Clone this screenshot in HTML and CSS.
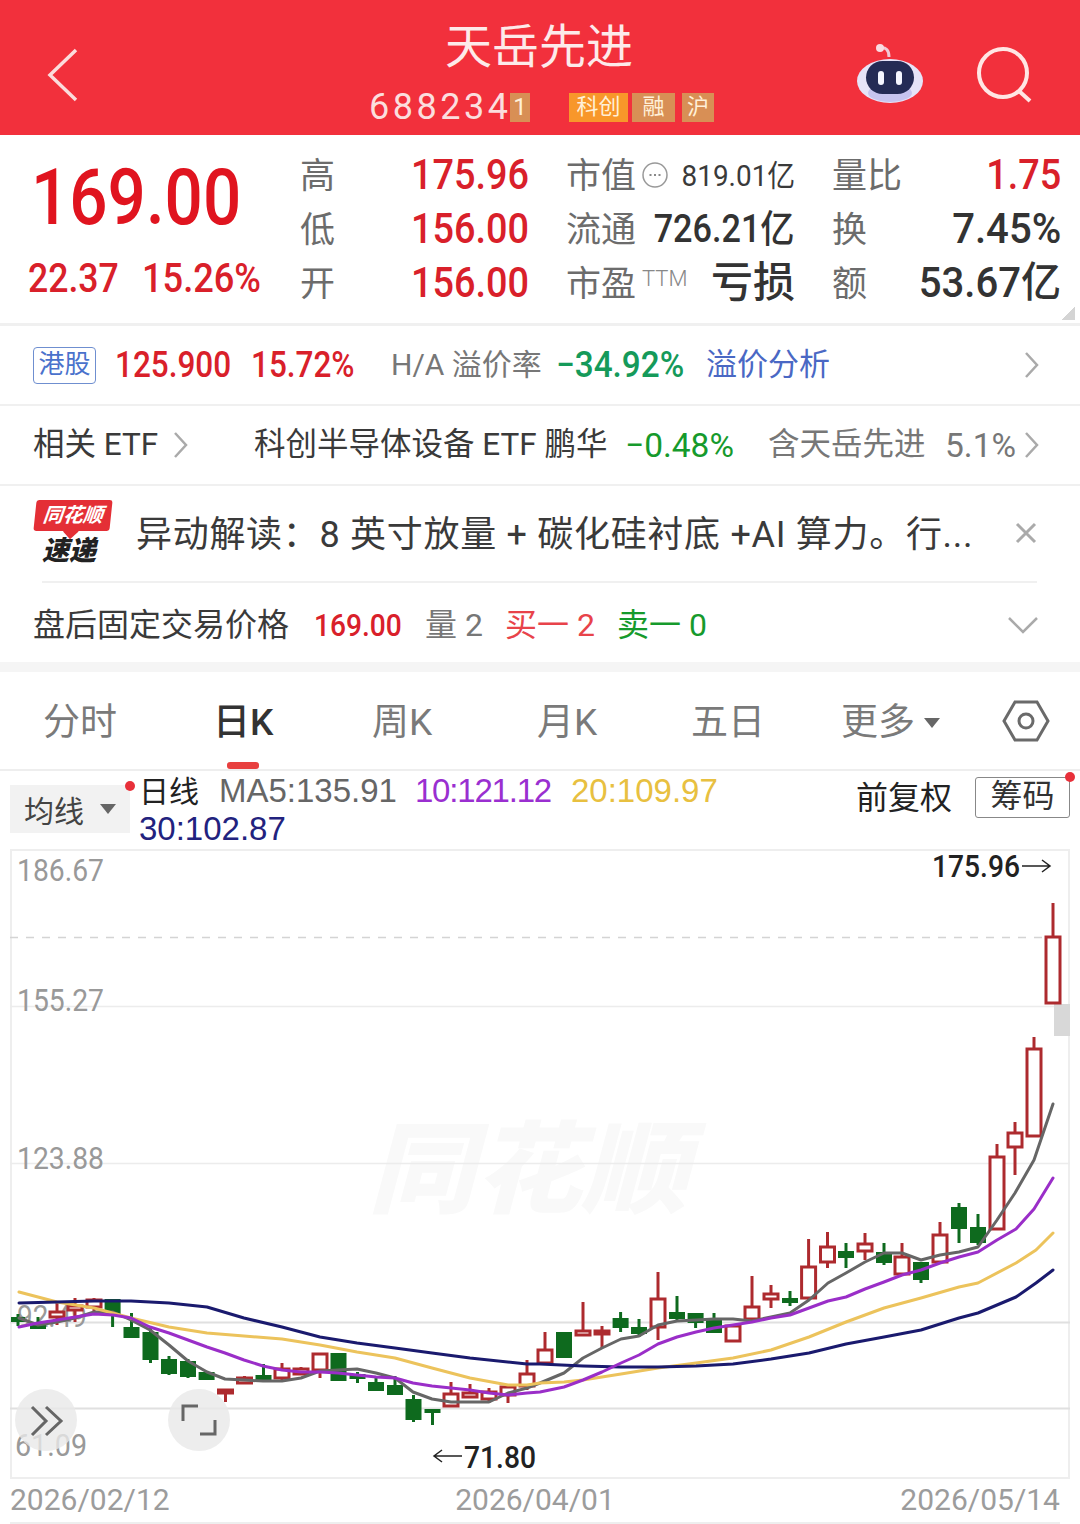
FILE: index.html
```html
<!DOCTYPE html>
<html lang="zh">
<head>
<meta charset="utf-8">
<title>天岳先进</title>
<link rel="stylesheet" href="styles.css">
</head>
<body>
<div class="page">
  <header class="header">
    <svg class="back" viewBox="0 0 32 56" width="32" height="56"><path d="M29 2 3 27l26 25" /></svg>
    <div class="head-mid">
      <div class="title">天岳先进</div>
      <div class="code-row">
        <span class="code">68823<span class="code-last">4</span></span><span class="tag tag-dim tag-one">1</span>
        <span class="tag tag-hot tag-kc">科创</span>
        <span class="tag tag-dim tag-rong">融</span>
        <span class="tag tag-dim tag-hu">沪</span>
      </div>
    </div>
    <svg class="robot" viewBox="0 0 70 62" width="70" height="62">
      <path class="robot-ant" d="M25 5c6-1 9 2 9 9"/>
      <circle class="robot-ball" cx="25" cy="5" r="4"/>
      <ellipse class="robot-head" cx="35" cy="38" rx="33" ry="22"/>
      <ellipse class="robot-chin" cx="35" cy="50" rx="22" ry="9"/>
      <rect class="robot-face" x="11" y="18" width="48" height="33" rx="16.5"/>
      <rect class="robot-eye" x="23" y="28" width="6" height="14" rx="3"/>
      <rect class="robot-eye" x="41" y="28" width="6" height="14" rx="3"/>
    </svg>
    <svg class="search" viewBox="0 0 60 62" width="60" height="62"><circle cx="27" cy="27" r="24"/><path d="M43 45l11 10"/></svg>
  </header>

  <section class="quote">
    <div class="price">
      <div class="price-main">169.00</div>
      <div class="price-sub"><span class="sub-a">22.37</span><span class="sub-b">15.26%</span></div>
    </div>
    <div class="stats">
      <div class="cell"><span class="lab">高</span><span class="val red">175.96</span></div>
      <div class="cell"><span class="lab">市值</span><svg class="more-dot" viewBox="0 0 28 28" width="28" height="28"><circle cx="14" cy="14" r="12"/><path d="M8.500 14h2M13 14h2M17.500 14h2"/></svg><span class="val-sm">819.01亿</span></div>
      <div class="cell"><span class="lab">量比</span><span class="val red">1.75</span></div>
      <div class="cell"><span class="lab">低</span><span class="val red">156.00</span></div>
      <div class="cell"><span class="lab">流通</span><span class="val val-md dark">726.21亿</span></div>
      <div class="cell"><span class="lab">换</span><span class="val val-wide dark">7.45%</span></div>
      <div class="cell"><span class="lab">开</span><span class="val red">156.00</span></div>
      <div class="cell"><span class="lab">市盈<sup class="ttm">TTM</sup></span><span class="val-cn">亏损</span></div>
      <div class="cell"><span class="lab">额</span><span class="val val-wide dark">53.67亿</span></div>
    </div>
    <i class="corner"></i>
  </section>

  <section class="row row-hk">
    <span class="hk-tag">港股</span>
    <span class="num red">125.900</span>
    <span class="num red">15.72%</span>
    <span class="txt gray">H/A 溢价率</span>
    <span class="num num-wide teal">−34.92%</span>
    <span class="txt blue">溢价分析</span>
    <svg class="chev" viewBox="0 0 16 28" width="16" height="28"><path d="M2 2l11 12L2 26"/></svg>
  </section>

  <section class="row row-etf">
    <span class="txt ink">相关 ETF</span>
    <svg class="chev" viewBox="0 0 16 28" width="16" height="28"><path d="M2 2l11 12L2 26"/></svg>
    <span class="txt ink">科创半导体设备 ETF 鹏华</span>
    <span class="num-l green">−0.48%</span>
    <span class="txt gray">含天岳先进</span>
    <span class="num-l gray">5.1%</span>
    <svg class="chev" viewBox="0 0 16 28" width="16" height="28"><path d="M2 2l11 12L2 26"/></svg>
  </section>

  <section class="news">
    <div class="logo">
      <div class="bubble"><span class="bubble-text">同花顺</span></div>
      <div class="logo-sub">速递</div>
    </div>
    <div class="news-text">异动解读：8 英寸放量 + 碳化硅衬底 +AI 算力。行...</div>
    <svg class="close" viewBox="0 0 24 24" width="24" height="24"><path d="M3 3l18 18M21 3 3 21"/></svg>
  </section>

  <section class="after">
    <span class="txt-32 ink">盘后固定交易价格</span>
    <span class="num-m red">169.00</span>
    <span class="txt-32 gray">量 2</span>
    <span class="txt-32 rose">买一 2</span>
    <span class="txt-32 green">卖一 0</span>
    <svg class="down" viewBox="0 0 32 18" width="32" height="18"><path d="M2 2l14 14L30 2"/></svg>
  </section>

  <div class="band"></div>

  <nav class="tabs">
    <span class="tab">分时</span>
    <span class="tab tab-on">日K</span>
    <span class="tab">周K</span>
    <span class="tab">月K</span>
    <span class="tab">五日</span>
    <span class="tab">更多<i class="tab-caret"></i></span>
    <svg class="hex" viewBox="0 0 48 44" width="48" height="44"><path d="M2 22 13 3h22l11 19-11 19H13z"/><circle cx="24" cy="22" r="7"/></svg>
  </nav>

  <section class="legend">
    <div class="ma-select"><span>均线</span><i class="ma-caret"></i><i class="dot dot-ma"></i></div>
    <div class="ma-text">
      <span class="ma-day">日线</span><span class="ma-5">MA5:135.91</span><span class="ma-10">10:121.12</span><span class="ma-20">20:109.97</span><br>
      <span class="ma-30">30:102.87</span>
    </div>
    <div class="legend-right">
      <span class="adj">前复权</span>
      <span class="chips">筹码<i class="dot dot-chips"></i></span>
    </div>
  </section>

  <section class="chart">
    <svg class="chart-svg" viewBox="10 849 1060 630" width="1060" height="630">
      <text class="wm" x="368" y="1205" textLength="320" lengthAdjust="spacingAndGlyphs">同花顺</text>
      <path class="grid-dash" d="M10 937.500H1054"/>
      <path class="grid" d="M10 1006.500H1070M10 1163.500H1070"/>
      <path class="grid-strong" d="M10 1322.500H1070M10 1408.500H1070"/>
      <rect class="thumb" x="1054" y="1004" width="16" height="32"/>
      <text class="axis" x="17" y="881" textLength="87" lengthAdjust="spacingAndGlyphs">186.67</text>
      <text class="axis" x="17" y="1011" textLength="87" lengthAdjust="spacingAndGlyphs">155.27</text>
      <text class="axis" x="17" y="1169" textLength="87" lengthAdjust="spacingAndGlyphs">123.88</text>
      <text class="axis" x="17" y="1327" textLength="70" lengthAdjust="spacingAndGlyphs">92.49</text>
      <text class="axis" x="15" y="1456" textLength="72" lengthAdjust="spacingAndGlyphs">61.09</text>

      <g class="up">
        <path d="M1053 903V1003"/><rect x="1046" y="937" width="14" height="66"/>
        <path d="M1034 1037V1136"/><rect x="1027" y="1049" width="14" height="87"/>
        <path d="M1015 1122V1175"/><rect x="1008" y="1133" width="14" height="14"/>
        <path d="M997 1144V1229"/><rect x="990" y="1157" width="14" height="72"/>
        <path d="M940 1222V1262"/><rect x="933" y="1235" width="14" height="27"/>
        <path d="M902 1243V1274"/><rect x="895" y="1257" width="14" height="17"/>
        <path d="M865 1233V1260"/><rect x="858" y="1244" width="14" height="7"/>
        <path d="M827.500 1232V1268"/><rect x="820.500" y="1247" width="14" height="15"/>
        <path d="M808.600 1239V1300"/><rect x="801.600" y="1267" width="14" height="31"/>
        <path d="M771 1285V1308"/><rect x="764" y="1294" width="14" height="5"/>
        <path d="M752 1276V1319"/><rect x="745" y="1307" width="14" height="12"/>
        <rect x="726" y="1326" width="14" height="15"/>
        <path d="M658 1272V1340"/><rect x="651" y="1299" width="14" height="28"/>
        <path d="M602 1326V1348"/><rect x="595" y="1331" width="14" height="3"/>
        <path d="M583 1302V1335"/><rect x="576" y="1331" width="14" height="4"/>
        <path d="M545 1332V1363"/><rect x="538" y="1350" width="14" height="13"/>
        <path d="M527 1360V1390"/><rect x="520" y="1374" width="14" height="12"/>
        <path d="M508 1385V1403"/><rect x="501" y="1387" width="14" height="8"/>
        <path d="M489 1388V1403"/><rect x="482" y="1392" width="14" height="7"/>
        <path d="M470 1384V1397"/><rect x="463" y="1393" width="14" height="4"/>
        <path d="M451 1382V1407"/><rect x="444" y="1394" width="14" height="12"/>
        <path d="M320 1354V1378"/><rect x="313" y="1354" width="14" height="16"/>
        <path d="M301 1367V1374"/><rect x="294" y="1369" width="14" height="5"/>
        <path d="M282 1363V1382"/><rect x="275" y="1369" width="14" height="9"/>
        <path d="M244.500 1376V1384"/><rect x="237.500" y="1378" width="14" height="5"/>
        <path d="M225.500 1390V1402"/><rect x="218.500" y="1390" width="14" height="3"/>
        <path d="M94 1298V1312"/><rect x="87" y="1300" width="14" height="7"/>
        <path d="M75 1298V1322"/><rect x="68" y="1306" width="14" height="4"/>
        <path d="M57 1303V1325"/><rect x="50" y="1312" width="14" height="5"/>
      </g>
      <g class="dn">
        <path d="M978 1214V1245"/><rect x="971" y="1228" width="14" height="14"/>
        <path d="M959 1203V1243"/><rect x="952" y="1208" width="14" height="20"/>
        <path d="M921 1262V1283"/><rect x="914" y="1263" width="14" height="16"/>
        <path d="M884 1243V1265"/><rect x="877" y="1253" width="14" height="9"/>
        <path d="M846 1243V1268"/><rect x="839" y="1252" width="14" height="5"/>
        <path d="M790 1291V1306"/><rect x="783" y="1299" width="14" height="3"/>
        <path d="M714 1313V1333"/><rect x="707" y="1319" width="14" height="13"/>
        <path d="M695.600 1313V1328"/><rect x="688.600" y="1314" width="14" height="8"/>
        <path d="M677 1296V1320"/><rect x="670" y="1313" width="14" height="5"/>
        <path d="M639 1319V1337"/><rect x="632" y="1328" width="14" height="5"/>
        <path d="M620.600 1312V1332"/><rect x="613.600" y="1319" width="14" height="8"/>
        <path d="M564 1333V1358"/><rect x="557" y="1333" width="14" height="24"/>
        <path d="M432.500 1410V1425"/><rect x="425.500" y="1410" width="14" height="2"/>
        <path d="M413.500 1395V1422"/><rect x="406.500" y="1400" width="14" height="19"/>
        <path d="M395 1376V1394"/><rect x="388" y="1386" width="14" height="8"/>
        <path d="M376 1378V1390"/><rect x="369" y="1383" width="14" height="7"/>
        <path d="M357.500 1372V1383"/><rect x="350.500" y="1375" width="14" height="3"/>
        <rect x="331.500" y="1354" width="14" height="26"/>
        <path d="M263.500 1364V1380"/><rect x="256.500" y="1376" width="14" height="4"/>
        <path d="M206.600 1371V1379"/><rect x="199.600" y="1373" width="14" height="6"/>
        <path d="M188 1359V1378"/><rect x="181" y="1362" width="14" height="14"/>
        <path d="M169 1356V1375"/><rect x="162" y="1360" width="14" height="13"/>
        <path d="M150.500 1327V1363"/><rect x="143.500" y="1333" width="14" height="26"/>
        <path d="M131.500 1313V1337"/><rect x="124.500" y="1328" width="14" height="9"/>
        <path d="M112.600 1300V1327"/><rect x="105.600" y="1300" width="14" height="15"/>
        <path d="M38 1317V1328"/><rect x="31" y="1326" width="14" height="2"/>
        <path d="M18 1314V1326"/><rect x="12" y="1318" width="12" height="3"/>
      </g>

      <polyline class="ma m5" points="19,1318 38,1325 57,1322 75,1318 94,1312 113,1312 131,1320 150,1330 169,1345 188,1361 207,1372 225,1379 244,1380 263,1381 282,1381 301,1378 320,1371 338,1370 357,1369 376,1373 395,1378 413,1392 432,1399 451,1402 470,1402 489,1402 508,1393 527,1388 540,1383 564,1373 583,1358 602,1348 621,1339 639,1336 658,1325 677,1321 696,1320 714,1319 733,1319 752,1321 771,1317 790,1313 809,1300 828,1283 846,1273 865,1262 884,1253 902,1253 921,1260 940,1255 959,1252 978,1247 997,1220 1015,1193 1034,1160 1053,1104"/>
      <polyline class="ma m20" points="19,1292 57,1302 94,1308 131,1318 169,1327 207,1333 244,1336 282,1339 320,1345 357,1352 395,1358 432,1368 470,1378 508,1385 527,1385 540,1383 564,1382 583,1380 621,1374 658,1368 696,1363 733,1358 771,1350 809,1337 846,1322 884,1308 921,1298 959,1287 978,1283 1016,1263 1036,1250 1053,1233"/>
      <polyline class="ma m30" points="19,1303 57,1302 94,1301 131,1301 169,1303 207,1307 244,1318 282,1327 320,1337 357,1343 395,1348 432,1353 470,1358 527,1364 540,1364 583,1366 621,1367 658,1367 696,1366 733,1364 771,1359 809,1353 846,1344 884,1337 921,1330 959,1318 978,1313 1016,1297 1036,1283 1053,1270"/>
      <polyline class="ma m10" points="19,1327 38,1323 57,1320 75,1317 94,1314 113,1315 131,1318 150,1327 169,1333 188,1340 207,1347 225,1353 244,1360 263,1366 282,1370 301,1372 320,1372 338,1373 357,1375 376,1377 395,1378 413,1383 432,1386 451,1388 470,1390 489,1393 508,1395 527,1393 540,1392 564,1387 583,1380 602,1372 621,1363 639,1355 658,1344 677,1337 696,1332 714,1328 733,1325 752,1322 771,1318 790,1315 809,1308 828,1301 846,1297 865,1289 884,1282 902,1275 921,1270 940,1263 959,1257 978,1252 997,1240 1016,1229 1034,1209 1053,1178"/>

      <circle class="fab" cx="46" cy="1420" r="31"/>
      <circle class="fab" cx="199" cy="1420" r="31"/>
      <path class="fab-ic" d="M32 1407l14 14-14 14M46 1407l15 14-15 14"/>
      <path class="fab-ic" d="M183 1421v-15h15M215 1420v14h-15"/>

      <text class="mark" x="932" y="877" textLength="88" lengthAdjust="spacingAndGlyphs">175.96</text>
      <path class="arrow" d="M1022 866h28m-8-6 8 6-8 6"/>
      <path class="arrow" d="M462 1456h-28m8-6-8 6 8 6"/>
      <text class="mark" x="464" y="1468" textLength="72" lengthAdjust="spacingAndGlyphs">71.80</text>
    </svg>
  </section>

  <footer class="dates">
    <span>2026/02/12</span><span>2026/04/01</span><span>2026/05/14</span>
  </footer>
</div>
</body>
</html>
```

FILE: styles.css
```css
* { box-sizing: border-box; margin: 0; padding: 0; }
html, body { background: #fff; }
body {
  width: 1080px;
  height: 1524px;
  overflow: hidden;
  font-family: Roboto, "Noto Sans CJK SC", sans-serif;
  color: #333;
}
.page { width: 1080px; height: 1524px; overflow: hidden; }
i { display: block; font-style: normal; }
.red { color: #d9202a; }
.dark { color: #333; }
.teal { color: #159a5a; }
.green { color: #169a2c; }
.rose { color: #e8434a; }
.gray { color: #777; }
.blue { color: #4a68c4; }
.ink { color: #3a3a3a; }

/* header */
.header {
  height: 135px;
  background: #f2303c;
  display: grid;
  grid-template-columns: 48px 790px 70px 60px;
  padding-left: 47px;
  position: relative;
}
.back { margin-top: 48px; }
.back path { fill: none; stroke: #fbdcdc; stroke-width: 3.500px; }
.head-mid { width: 790px; margin-left: -48px; padding-top: 21px; }
.title {
  margin-left: 398px;
  font-size: 47px;
  line-height: 52px;
  color: #fdeaea;
  font-weight: 400;
}
.code-row {
  display: grid;
  grid-template-columns: 141px 59px 63px 50px 32px;
  margin-left: 322px;
  margin-top: 16px;
  height: 36px;
  align-items: center;
  position: relative;
}
.code {
  font-size: 36px;
  letter-spacing: 3.500px;
  font-weight: 400;
  color: #fbdede;
  white-space: nowrap;
  line-height: 36px;
}
.tag {
  height: 29px;
  font-size: 22px;
  line-height: 28px;
  text-align: center;
  color: #fff0d8;
}
.tag-hot { background: #f8972a; width: 59px; }
.tag-dim { background: #d88f55; }
.tag-one { width: 20px; font-size: 24px; font-family: Roboto, sans-serif; }
.tag-rong { width: 43px; }
.tag-hu { width: 32px; }
.robot { margin-top: 43px; margin-left: -30px; }
.robot-ant { fill: none; stroke: #f2c9d6; stroke-width: 3px; }
.robot-ball { fill: #f9dbe2; }
.robot-head { fill: #e6e3f8; }
.robot-chin { fill: #c7c4ef; }
.robot-face { fill: #242b55; }
.robot-eye { fill: #f5f6ff; }
.search { margin-top: 46px; margin-left: 21px; }
.search circle, .search path { fill: none; stroke: #ffe6e4; stroke-width: 4px; }

/* quote */
.quote {
  height: 191px;
  border-bottom: 3px solid #f0f0f0;
  display: grid;
  grid-template-columns: 272px 761px;
  padding: 13px 0 0 28px;
  position: relative;
}
.price-main {
  font-size: 77px;
  line-height: 78px;
  font-weight: 500;
  color: #e0141f;
  transform: scaleX(.875);
  transform-origin: left;
  margin: 11px 0 0 3px;
  white-space: nowrap;
}
.price-sub { display: grid; grid-template-columns: 115px 130px; margin-top: 19px; }
.sub-a, .sub-b {
  font-size: 40px;
  line-height: 46px;
  font-weight: 500;
  color: #d9202a;
  transform: scaleX(.89);
  transform-origin: left;
  white-space: nowrap;
}
.sub-b { transform: scaleX(.905); margin-left: -1px; }
.stats {
  display: grid;
  grid-template-columns: 229px 229px 229px;
  column-gap: 37px;
  grid-auto-rows: 54px;
}
.cell { display: flex; align-items: center; white-space: nowrap; position: relative; }
.lab { font-size: 35px; line-height: 54px; color: #6c6c6c; flex: none; padding-top: 3px; }
.val {
  margin-left: auto;
  font-size: 42px;
  line-height: 54px;
  font-weight: 500;
  transform: scaleX(.9);
  transform-origin: right;
}
.val-md { font-size: 38px; }
.val-wide { transform: scaleX(.955); }
.val-sm { margin-left: auto; font-size: 30px; color: #3a3a3a; margin-top: -4px; transform: scaleX(.93); transform-origin: right; }
.val-cn { margin-left: auto; font-size: 42px; line-height: 54px; font-weight: 500; color: #333; }
.ttm { font-size: 22px; line-height: 22px; font-weight: 300; color: #888; vertical-align: 10px; margin-left: 6px; }
.more-dot { margin-left: 5px; flex: none; }
.more-dot circle { fill: none; stroke: #999; stroke-width: 1.500px; }
.more-dot path { fill: none; stroke: #888; stroke-width: 2px; }
.corner {
  position: absolute;
  right: 5px;
  bottom: 3px;
  width: 14px;
  height: 14px;
  background: linear-gradient(135deg, transparent 50%, #d4d4d4 50%);
}

/* rows */
.row {
  display: grid;
  align-items: center;
  padding-left: 33px;
  border-bottom: 2px solid #f0f0f0;
  white-space: nowrap;
}
.row-hk { height: 80px; grid-template-columns: 82px 136px 140px 165px 150px 318px 16px; }
.row-etf { height: 80px; grid-template-columns: 140px 81px 371px 143px 177px 79px 16px; }
.hk-tag {
  width: 63px;
  height: 37px;
  border: 1.500px solid #6f8fd0;
  border-radius: 4px;
  color: #4a72cc;
  font-size: 26px;
  line-height: 33px;
  text-align: center;
}
.num, .num-l {
  font-size: 36px;
  font-weight: 500;
  line-height: 44px;
  transform: scaleX(.875);
  transform-origin: left;
}
.num-wide { transform: scaleX(.925); }
.num-l { font-weight: 400; font-size: 34px; transform: scaleX(.985); }
.txt { font-size: 31px; line-height: 44px; }
.row-hk .txt:nth-of-type(4) { font-size: 30px; }
.row-etf .txt { font-size: 31.500px; }
.chev path { fill: none; stroke: #aaa; stroke-width: 2.500px; }

/* news */
.news {
  height: 97px;
  display: grid;
  grid-template-columns: 103px 879px 24px;
  align-items: center;
  padding-left: 33px;
  position: relative;
}
.news::after {
  content: "";
  position: absolute;
  left: 42px;
  right: 43px;
  bottom: 0;
  height: 2px;
  background: #f0f0f0;
}
.logo { width: 80px; margin-top: -3px; }
.bubble {
  width: 76px;
  height: 31px;
  margin-left: 2px;
  background: #e42f36;
  border-radius: 3px;
  transform: skewX(-6deg);
  text-align: center;
  position: relative;
}
.bubble::after {
  content: "";
  position: absolute;
  left: 32px;
  bottom: -6px;
  width: 11px;
  height: 11px;
  background: #e42f36;
  transform: rotate(45deg);
}
.bubble-text {
  position: relative;
  z-index: 1;
  color: #fff;
  font-size: 20px;
  line-height: 31px;
  font-weight: 700;
  font-style: italic;
}
.logo-sub {
  font-size: 27px;
  line-height: 30px;
  font-weight: 900;
  font-style: italic;
  color: #222;
  margin-left: 9px;
  margin-top: 5px;
}
.news-text { font-size: 36px; line-height: 48px; letter-spacing: .7px; color: #3a3a3a; white-space: nowrap; }
.close { margin-top: -4px; margin-left: -1px; }
.close path { fill: none; stroke: #aaa; stroke-width: 3px; }

.after {
  height: 79px;
  display: grid;
  grid-template-columns: 281px 111px 80px 112px 390px 32px;
  align-items: center;
  padding: 4px 0 0 33px;
  white-space: nowrap;
}
.txt-32 { font-size: 32px; line-height: 44px; }
.num-m {
  font-size: 32px;
  font-weight: 500;
  line-height: 44px;
  transform: scaleX(.88);
  transform-origin: left;
}
.down path { fill: none; stroke: #aaa; stroke-width: 2.500px; }
.band { height: 10px; background: #f5f5f5; }

/* tabs */
.tabs {
  height: 99px;
  display: grid;
  grid-template-columns: 170px 159px 165px 154px 150px 161px 48px;
  align-items: center;
  padding: 4px 0 0 45px;
  border-bottom: 2px solid #eee;
  position: relative;
}
.tab { font-size: 37px; line-height: 50px; color: #7a7a7a; display: flex; align-items: center; white-space: nowrap; margin-left: -2px; }
.tab-on { color: #333; font-weight: 500; position: relative; }
.tab-on::after {
  content: "";
  position: absolute;
  left: 14px;
  top: 64px;
  width: 32px;
  height: 7px;
  border-radius: 3px;
  background: #e8403f;
}
.tab-caret {
  width: 0;
  height: 0;
  margin-left: 9px;
  border-left: 8px solid transparent;
  border-right: 8px solid transparent;
  border-top: 10px solid #666;
}
.hex { margin-left: -2px; margin-top: -4px; }
.hex path, .hex circle { fill: none; stroke: #6a6a6a; stroke-width: 3px; }

/* legend */
.legend {
  height: 78px;
  display: grid;
  grid-template-columns: 129px 717px 214px;
  padding-left: 10px;
  position: relative;
}
.ma-select {
  width: 120px;
  height: 48px;
  margin-top: 14px;
  background: #f2f2f2;
  display: flex;
  align-items: center;
  padding-left: 14px;
  font-size: 30px;
  color: #444;
  position: relative;
}
.ma-caret {
  width: 0;
  height: 0;
  margin-left: 16px;
  border-left: 8px solid transparent;
  border-right: 8px solid transparent;
  border-top: 10px solid #666;
}
.dot { position: absolute; width: 10px; height: 10px; border-radius: 50%; background: #e8303a; }
.dot-ma { right: -5px; top: -4px; }
.ma-text { font-family: "Liberation Sans", "Noto Sans CJK SC", sans-serif; font-size: 33px; line-height: 37px; white-space: nowrap; padding-top: 1px; }
.ma-day { color: #222; font-size: 30px; margin-right: 20px; }
.ma-5 { color: #666; margin-right: 18px; }
.ma-10 { color: #9a2fd0; margin-right: 20px; letter-spacing: -1.200px; }
.ma-20 { color: #e8c040; }
.ma-30 { color: #22227e; }
.legend-right { display: flex; align-items: flex-start; padding-top: 6px; }
.adj { font-size: 32px; line-height: 42px; color: #222; width: 119px; flex: none; white-space: nowrap; }
.chips {
  flex: none;
  width: 95px;
  height: 41px;
  border: 1.500px solid #888;
  border-radius: 3px;
  font-size: 32px;
  line-height: 37px;
  text-align: center;
  color: #333;
  position: relative;
}
.dot-chips { right: -6px; top: -6px; }

/* chart */
.chart {
  width: 1060px;
  height: 630px;
  margin-left: 10px;
  position: relative;
  border: 2px solid #eee;
}
.chart-svg { display: block; margin: -2px; overflow: visible; }
.chart-svg text { font-family: Roboto, sans-serif; }
.chart-svg .wm { font-family: "Noto Sans CJK SC", sans-serif; font-size: 100px; font-weight: 900; font-style: italic; fill: #f9f9f9; }
.grid-dash { stroke: #d4d4d4; stroke-width: 1.500px; stroke-dasharray: 8 8; fill: none; }
.grid { stroke: #ececec; stroke-width: 1.500px; fill: none; }
.grid-strong { stroke: #e0e0e0; stroke-width: 2px; fill: none; }
.thumb { fill: #d8d8d8; }
.axis { font-size: 32px; fill: #999; }
.mark { font-size: 32px; font-weight: 500; fill: #222; }
.arrow { fill: none; stroke: #222; stroke-width: 1.500px; }
.up path { stroke: #ad2a2e; stroke-width: 3px; fill: none; }
.up rect { stroke: #ad2a2e; stroke-width: 3px; fill: #fff; }
.dn path { stroke: #0e6a1e; stroke-width: 3px; fill: none; }
.dn rect { stroke: #0e6a1e; stroke-width: 2px; fill: #0e6a1e; }
.ma { fill: none; stroke-width: 3px; stroke-linejoin: round; stroke-linecap: round; }
.m5 { stroke: #666; }
.m10 { stroke: #9a2ec8; }
.m20 { stroke: #ecc35c; }
.m30 { stroke: #1a1a6e; }
.fab { fill: #e8e8e8; fill-opacity: .8; }
.fab-ic { fill: none; stroke: #666; stroke-width: 3px; }

/* dates */
.dates {
  height: 45px;
  margin: 0 20px 0 10px;
  display: flex;
  justify-content: space-between;
  font-size: 30px;
  line-height: 41px;
  color: #9c9c9c;
  border-bottom: 2px solid #eee;
  font-family: Roboto, sans-serif;
}
```
